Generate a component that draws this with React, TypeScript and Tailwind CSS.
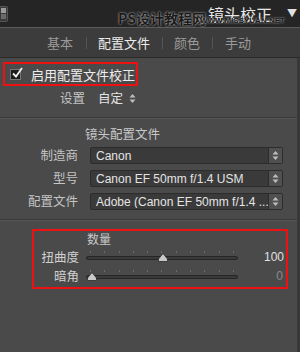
import React from 'react';

const FONT = { fontFamily: '"Noto Sans CJK SC", "Noto Sans", sans-serif' };
const LATIN = { fontFamily: '"Liberation Sans", "Noto Sans CJK SC", sans-serif' };

const Arrows = () => (
  <svg width="7" height="11" viewBox="0 0 7 11" className="block">
    <path d="M3.5 1 L6.5 4.5 H0.5 Z" fill="currentColor" />
    <path d="M3.5 10 L6.5 6.5 H0.5 Z" fill="currentColor" />
  </svg>
);

const Select = ({ value }: { value: string }) => (
  <div className="flex h-[17px] w-[193px] items-center rounded-[2px] border border-[#2c2c2c] bg-[#3a3a3a]">
    <span className="flex-1 overflow-hidden whitespace-nowrap pl-[5px] text-[12px] leading-none text-[#e4e4e4]" style={LATIN}>
      {value}
    </span>
    <span className="flex h-full w-[14px] items-center justify-center border-l border-[#2c2c2c] bg-[#505050] text-[#bdbdbd]">
      <Arrows />
    </span>
  </div>
);

const Slider = ({ pos }: { pos: number }) => (
  <div className="relative h-[12px] w-[152px]">
    {/* tick marks */}
    <div className="absolute left-[4px] right-[4px] top-0 flex justify-between">
      {Array.from({ length: 11 }).map((_, i) => (
        <span key={i} className="h-[2px] w-px bg-[#6a6a6a]" />
      ))}
    </div>
    <div className="absolute left-0 right-0 top-[5px] h-[4px] rounded-full border border-[#262626] bg-[#3a3a3a]" />
    <svg width="10" height="9" viewBox="0 0 10 9" className="absolute top-[2px]" style={{ left: pos - 5 }}>
      <path d="M5 0.5 L9.5 6 V8.5 H0.5 V6 Z" fill="#c9c9c9" stroke="#2a2a2a" strokeWidth="0.8" />
    </svg>
  </div>
);

export default function App() {
  return (
    <div className="flex h-[352px] w-[300px] flex-col overflow-hidden bg-[#4a4a4a]" style={FONT}>
      {/* header */}
      <div className="relative flex h-[27px] items-center bg-[#252525]">
        <div className="flex h-[16px] w-[8px] flex-col justify-center gap-[1px] rounded-r-[2px] border border-l-0 border-[#555] bg-[#3a3a3a] pl-[1px]">
          <span className="h-[5px] w-[5px] bg-[#9a9a9a]" />
          <span className="h-[5px] w-[5px] bg-[#6a6a6a]" />
        </div>
        <span className="ml-auto mr-[28px] text-[16px] leading-none text-[#e8e8e8]">镜头校正</span>
        <span className="absolute right-[3px] top-[8px] text-[10px] leading-none text-[#e0e0e0]">▼</span>
        <span className="absolute left-[118px] top-[11px] text-[14px] font-bold leading-none text-[#1a1a1a] [text-shadow:0_0_2px_#ddd]">PS设计教程网</span>
        <span className="absolute left-[200px] top-[17px] text-[8px] font-bold leading-none text-[#1a1a1a] [text-shadow:0_0_2px_#ddd]" style={LATIN}>WWW.MISSYUAN.NET</span>
      </div>

      {/* tabs */}
      <div className="flex h-[31px] items-center border-t border-[#5a5a5a] border-b border-b-[#2a2a2a] bg-[#3c3c3c] text-[13px] leading-none">
        <span className="ml-[47px] text-[#9a9a9a]">基本</span>
        <span className="ml-[13px] h-[12px] w-px bg-[#555]" />
        <span className="ml-[11px] text-[#ececec]">配置文件</span>
        <span className="ml-[12px] h-[12px] w-px bg-[#555]" />
        <span className="ml-[11px] text-[#9a9a9a]">颜色</span>
        <span className="ml-[12px] h-[12px] w-px bg-[#555]" />
        <span className="ml-[12px] text-[#9a9a9a]">手动</span>
      </div>

      {/* body */}
      <div className="flex flex-1 flex-col border-r-[3px] border-[#383838]">
        <div className="ml-[3px] mt-[4px] flex h-[24px] w-[135px] items-center border-2 border-[#ee1111] pl-[5px]">
          <span className="relative h-[11px] w-[11px] border border-[#777] bg-[#1c1c1c]">
            <svg width="12" height="12" viewBox="0 0 12 12" className="absolute -top-[3px] left-0">
              <path d="M2 6.5 L5 9.5 L11 1" fill="none" stroke="#f0f0f0" strokeWidth="1.8" />
            </svg>
          </span>
          <span className="ml-[10px] text-[13px] leading-none text-[#ededed]">启用配置文件校正</span>
        </div>

        <div className="mt-[6px] flex items-center text-[12.5px] leading-none">
          <span className="ml-[60px] text-[#c4c4c4]">设置</span>
          <span className="ml-[13px] text-[#e4e4e4]">自定</span>
          <span className="ml-[6px] text-[#bdbdbd]"><Arrows /></span>
        </div>

        <div className="mt-[12px] h-px bg-[#3a3a3a]" />
        <div className="h-px bg-[#565656]" />

        <div className="ml-[85px] mt-[9px] text-[12.5px] leading-none text-[#c8c8c8]">镜头配置文件</div>

        <div className="mt-[7px] flex flex-col gap-[6px]">
          {[
            ['制造商', 'Canon'],
            ['型号', 'Canon EF 50mm f/1.4 USM'],
            ['配置文件', 'Adobe (Canon EF 50mm f/1.4 ...'],
          ].map(([label, value]) => (
            <div key={label} className="flex items-center">
              <span className="w-[78px] text-right text-[12.5px] leading-none text-[#c4c4c4]">{label}</span>
              <span className="ml-[12px]"><Select value={value} /></span>
            </div>
          ))}
        </div>

        <div className="mt-[9px] h-px bg-[#3a3a3a]" />
        <div className="h-px bg-[#565656]" />

        <div className="ml-[32px] mt-[8px] flex h-[60px] w-[256px] flex-col border-2 border-[#ee1111]">
          <span className="ml-[53px] mt-[2px] text-[12px] leading-none text-[#c8c8c8]">数量</span>
          <div className="mt-[6px] flex items-center">
            <span className="w-[45px] text-right text-[12.5px] leading-none text-[#d0d0d0]">扭曲度</span>
            <span className="ml-[7px]"><Slider pos={77} /></span>
            <span className="ml-auto mr-[2px] text-[12px] leading-none text-[#e0e0e0]" style={LATIN}>100</span>
          </div>
          <div className="mt-[6px] flex items-center">
            <span className="w-[45px] text-right text-[12.5px] leading-none text-[#d0d0d0]">暗角</span>
            <span className="ml-[7px]"><Slider pos={6} /></span>
            <span className="ml-auto mr-[3px] text-[12px] leading-none text-[#8a8a8a]" style={LATIN}>0</span>
          </div>
        </div>
      </div>
    </div>
  );
}
